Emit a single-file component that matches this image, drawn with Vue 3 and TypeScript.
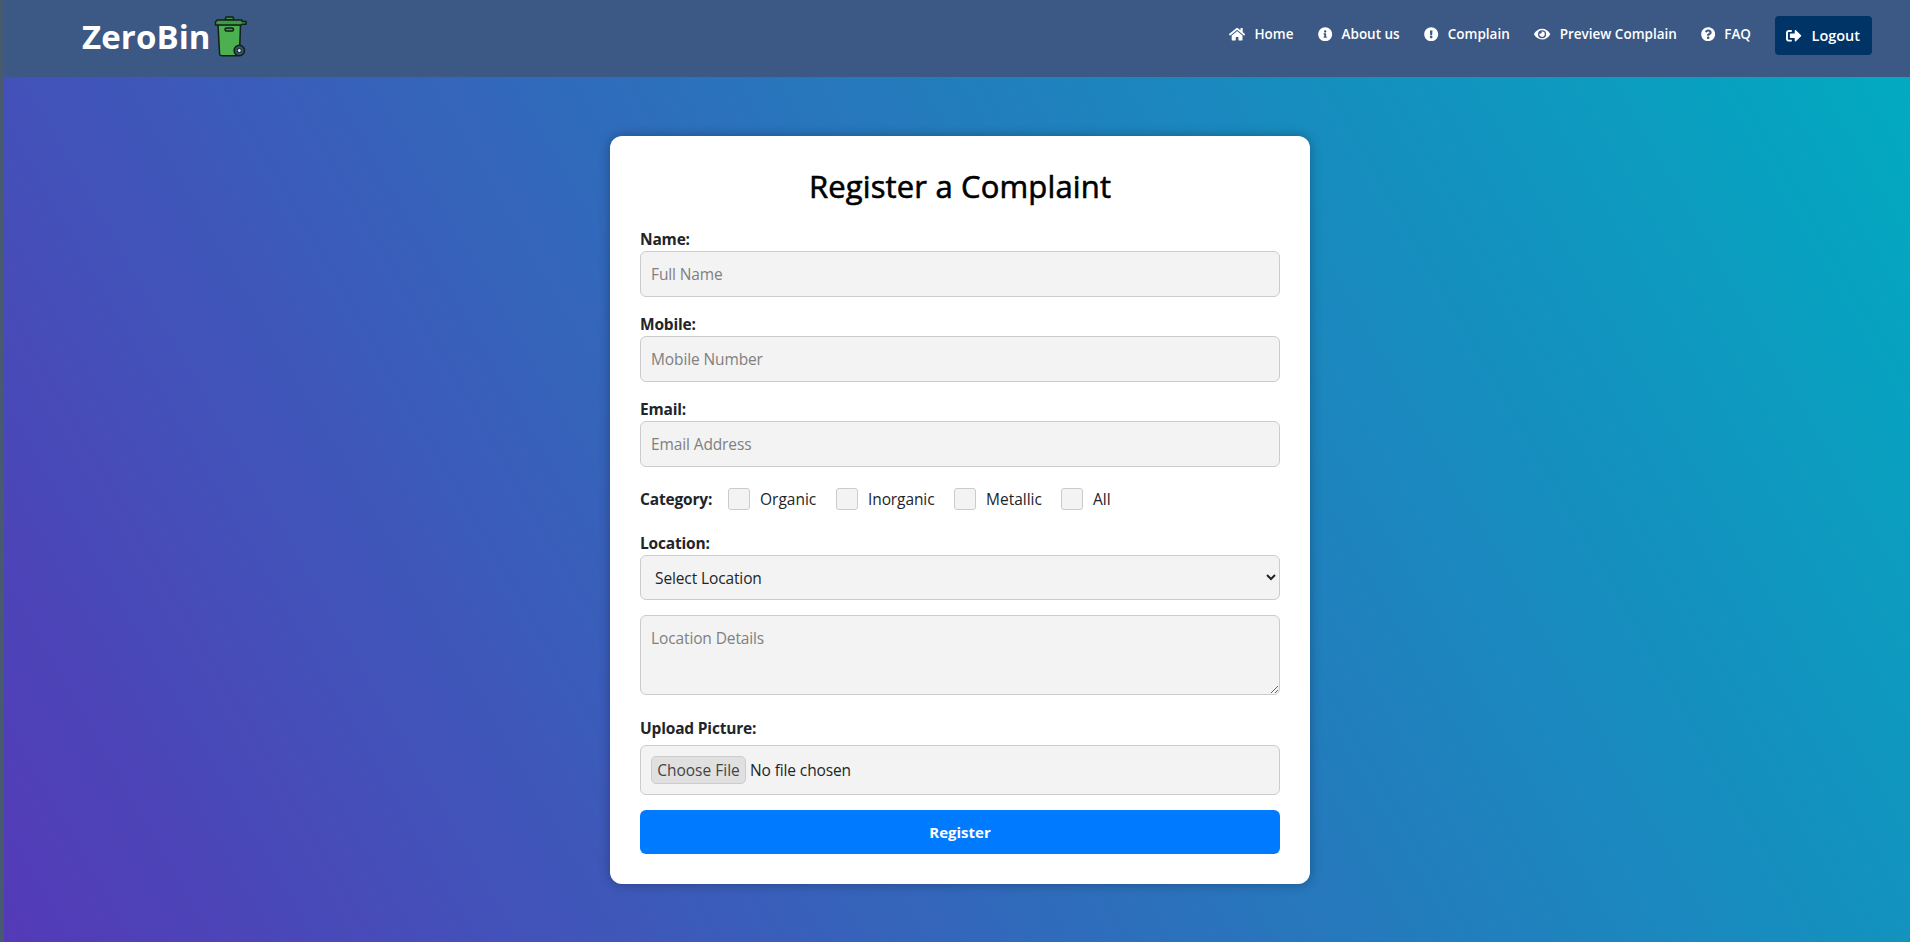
<script setup lang="ts">
import { ref } from 'vue'

interface NavLink {
  id: string
  label: string
  viewBox: string
  path: string
}

const links: NavLink[] = [
  {
    id: 'home',
    label: 'Home',
    viewBox: '0 0 576 512',
    path: 'M280.37 148.26L96 300.11V464a16 16 0 0 0 16 16l112.06-.29a16 16 0 0 0 15.92-16V368a16 16 0 0 1 16-16h64a16 16 0 0 1 16 16v95.64a16 16 0 0 0 16 16.05L464 480a16 16 0 0 0 16-16V300L295.67 148.26a12.19 12.19 0 0 0-15.3 0zM571.6 251.47L488 182.56V44.05a12 12 0 0 0-12-12h-56a12 12 0 0 0-12 12v72.61L318.47 43a48 48 0 0 0-61 0L4.34 251.47a12 12 0 0 0-1.6 16.9l25.5 31A12 12 0 0 0 45.15 301l235.22-193.74a12.19 12.19 0 0 1 15.3 0L530.9 301a12 12 0 0 0 16.9-1.6l25.5-31a12 12 0 0 0-1.7-16.93z',
  },
  {
    id: 'about',
    label: 'About us',
    viewBox: '0 0 512 512',
    path: 'M256 8C119.043 8 8 119.083 8 256c0 136.997 111.043 248 248 248s248-111.003 248-248C504 119.083 392.957 8 256 8zm0 110c23.196 0 42 18.804 42 42s-18.804 42-42 42-42-18.804-42-42 18.804-42 42-42zm56 254c0 6.627-5.373 12-12 12h-88c-6.627 0-12-5.373-12-12v-24c0-6.627 5.373-12 12-12h12v-64h-12c-6.627 0-12-5.373-12-12v-24c0-6.627 5.373-12 12-12h64c6.627 0 12 5.373 12 12v100h12c6.627 0 12 5.373 12 12v24z',
  },
  {
    id: 'complain',
    label: 'Complain',
    viewBox: '0 0 512 512',
    path: 'M504 256c0 136.997-111.043 248-248 248S8 392.997 8 256C8 119.083 119.043 8 256 8s248 111.083 248 248zm-248 50c-25.405 0-46 20.595-46 46s20.595 46 46 46 46-20.595 46-46-20.595-46-46-46zm-43.673-165.346l7.418 136c.347 6.364 5.609 11.346 11.982 11.346h48.546c6.373 0 11.635-4.982 11.982-11.346l7.418-136c.375-6.874-5.098-12.654-11.982-12.654h-63.383c-6.884 0-12.356 5.78-11.981 12.654z',
  },
  {
    id: 'preview',
    label: 'Preview Complain',
    viewBox: '0 0 576 512',
    path: 'M572.52 241.4C518.29 135.59 410.93 64 288 64S57.68 135.64 3.48 241.41a32.35 32.35 0 0 0 0 29.19C57.71 376.41 165.07 448 288 448s230.32-71.64 284.52-177.41a32.35 32.35 0 0 0 0-29.19zM288 400a144 144 0 1 1 144-144 143.93 143.93 0 0 1-144 144zm0-240a95.31 95.31 0 0 0-25.31 3.79 47.85 47.85 0 0 1-66.9 66.9A95.78 95.78 0 1 0 288 160z',
  },
  {
    id: 'faq',
    label: 'FAQ',
    viewBox: '0 0 512 512',
    path: 'M504 256c0 136.997-111.043 248-248 248S8 392.997 8 256C8 119.083 119.043 8 256 8s248 111.083 248 248zM262.655 90c-54.497 0-89.255 22.957-116.549 63.758-3.536 5.286-2.353 12.415 2.715 16.258l34.699 26.31c5.205 3.947 12.621 3.008 16.665-2.122 17.864-22.658 30.113-35.797 57.303-35.797 20.429 0 45.698 13.148 45.698 32.958 0 14.976-12.363 22.667-32.534 33.976C247.128 238.528 216 254.941 216 296v4c0 6.627 5.373 12 12 12h56c6.627 0 12-5.373 12-12v-1.333c0-28.462 83.186-29.647 83.186-106.667 0-58.002-60.165-102-116.531-102zM256 338c-25.365 0-46 20.635-46 46 0 25.364 20.635 46 46 46s46-20.636 46-46c0-25.365-20.635-46-46-46z',
  },
]

const fields = [
  { id: 'name', label: 'Name:', placeholder: 'Full Name' },
  { id: 'mobile', label: 'Mobile:', placeholder: 'Mobile Number' },
  { id: 'email', label: 'Email:', placeholder: 'Email Address' },
]

const categories = ['Organic', 'Inorganic', 'Metallic', 'All']
const picked = ref<string[]>([])
</script>

<template>
  <div class="page">
    <div class="main">
      <header class="bar">
        <div class="brand">
          <span class="brand-name">ZeroBin</span>
          <svg class="bin" viewBox="0 0 34 42" width="34" height="42">
            <g stroke="#10201a" stroke-width="1.5" stroke-linejoin="round">
              <path d="M11.500 4V2.200Q11.500 1 12.700 1h5.600q1.200 0 1.200 1.200V4z" fill="#3f9a45" />
              <path d="M4 8.500h22.500L25.500 38q-.2 1.700-2 1.700H7.600q-1.800 0-2-1.700z" fill="#4caf50" />
              <path d="M3.200 4h24.500l.5 1.500h3.800v2.700h-4l-.8.800H1.500V6z" fill="#3f9a45" />
              <rect x="11" y="12" width="8.500" height="3" rx="1.500" fill="#43a047" />
              <circle cx="25.300" cy="34.500" r="5.200" fill="#34516a" />
              <circle cx="25.300" cy="34.500" r="2" fill="#dfe8f0" stroke-width="1" />
            </g>
          </svg>
        </div>
        <nav class="nav">
          <a v-for="l in links" :key="l.id" class="link" :class="l.id">
            <svg class="icon" :viewBox="l.viewBox"><path :d="l.path" fill="currentColor" /></svg>
            <span>{{ l.label }}</span>
          </a>
          <button class="logout" type="button">
            <svg class="icon" viewBox="0 0 512 512">
              <path
                fill="currentColor"
                d="M497 273L329 441c-15 15-41 4.500-41-17v-96H152c-13.300 0-24-10.700-24-24v-96c0-13.300 10.700-24 24-24h136V88c0-21.400 25.900-32 41-17l168 168c9.300 9.400 9.300 24.600 0 34zM192 436v-40c0-6.600-5.400-12-12-12H96c-17.700 0-32-14.300-32-32V160c0-17.700 14.300-32 32-32h84c6.600 0 12-5.400 12-12V76c0-6.600-5.400-12-12-12H96c-53 0-96 43-96 96v192c0 53 43 96 96 96h84c6.600 0 12-5.400 12-12z"
              />
            </svg>
            <span>Logout</span>
          </button>
        </nav>
      </header>

      <form class="card" @submit.prevent>
        <h1>Register a Complaint</h1>

        <div v-for="f in fields" :key="f.id" class="field">
          <label :for="f.id">{{ f.label }}</label>
          <input :id="f.id" class="control" type="text" :placeholder="f.placeholder" />
        </div>

        <div class="categories">
          <span class="cat-title">Category:</span>
          <label v-for="c in categories" :key="c" class="cat" :class="c.toLowerCase()">
            <input v-model="picked" type="checkbox" :value="c" />
            <span>{{ c }}</span>
          </label>
        </div>

        <label for="location" class="label-location">Location:</label>
        <select id="location" class="control select">
          <option>Select Location</option>
        </select>
        <textarea class="control details" placeholder="Location Details"></textarea>

        <label for="picture" class="label-upload">Upload Picture:</label>
        <input id="picture" class="control file" type="file" />

        <button class="submit" type="submit">Register</button>
      </form>
    </div>
  </div>
</template>

<style>
body {
  margin: 0;
  overflow: hidden;
}
</style>

<style scoped>
* {
  box-sizing: border-box;
}
.page {
  height: 942px;
  padding-left: 4px;
  background: #475a70;
  font-family: 'Open Sans', 'Noto Sans', sans-serif;
  font-size: 15.500px;
  color: #212529;
}
.main {
  height: 942px;
  overflow: hidden;
  background: linear-gradient(60deg, rgb(84, 58, 183) 0%, rgb(0, 172, 193) 100%);
}
.bar {
  display: flex;
  justify-content: space-between;
  align-items: flex-start;
  height: 77px;
  padding: 16px 38px 0 78px;
  background: #3c5885;
  color: #fff;
}
.brand {
  display: flex;
  align-items: flex-start;
}
.brand-name {
  width: 132px;
  font-size: 33px;
  font-weight: 700;
  line-height: 42px;
  letter-spacing: 0.1px;
  white-space: nowrap;
}
.bin {
  display: block;
}
.nav {
  display: flex;
  align-items: flex-start;
}
.link {
  display: flex;
  align-items: center;
  height: 36px;
  margin-right: 24px;
  font-size: 13.500px;
  font-weight: 600;
  white-space: nowrap;
}
.link.home,
.link.about,
.link.complain {
  margin-right: 24.700px;
}
.icon {
  flex: none;
  height: 14.400px;
  margin-right: 9px;
}
.logout {
  display: flex;
  align-items: center;
  width: 97px;
  height: 39px;
  padding: 0 0 0 11px;
  border: 0;
  border-radius: 4px;
  background: #003366;
  color: #fff;
  font-family: inherit;
  font-size: 14.500px;
  font-weight: 600;
}
.logout .icon {
  height: 15.500px;
  margin-right: 10px;
}
.card {
  display: flex;
  flex-direction: column;
  width: 700px;
  height: 748px;
  margin: 59px 600px 0 606px;
  padding: 30px;
  border-radius: 12px;
  background: #fff;
  box-shadow: 0 0 12px rgba(0, 0, 0, 0.3);
}
h1 {
  margin: 0 0 22px;
  font-size: 31px;
  font-weight: 400;
  letter-spacing: 0.150px;
  line-height: 40px;
  text-align: center;
  color: #000;
  -webkit-text-stroke: 0.600px #000;
}
label,
.cat-title {
  line-height: 22px;
}
.field > label,
.label-location,
.label-upload,
.cat-title {
  display: block;
  height: 23px;
  font-weight: 700;
  letter-spacing: -0.180px;
  white-space: nowrap;
}
.field {
  height: 85px;
}
.control {
  display: block;
  width: 640px;
  height: 46px;
  margin: 0;
  padding: 0 10px;
  border: 1px solid #ccc;
  border-radius: 6px;
  background: #f3f3f3;
  font-family: inherit;
  font-size: inherit;
  letter-spacing: -0.120px;
  color: #212529;
}
.control::placeholder {
  color: #808080;
}
.categories {
  display: flex;
  align-items: center;
  height: 22px;
  margin-top: 5px;
}
.cat-title {
  width: 88px;
}
.cat {
  display: flex;
  align-items: center;
  width: 108px;
  white-space: nowrap;
}
.cat.inorganic {
  width: 118px;
  letter-spacing: -0.100px;
}
.cat.metallic {
  width: 107px;
}
.cat input {
  appearance: none;
  flex: none;
  width: 22px;
  height: 22px;
  margin: 0 10px 0 0;
  border: 1px solid #ccc;
  border-radius: 3px;
  background: #f3f3f3;
}
.label-location {
  margin-top: 22px;
}
.select {
  height: 45px;
}
.details {
  height: 80px;
  margin-top: 15px;
  padding-top: 10px;
  line-height: 24px;
  resize: vertical;
}
.label-upload {
  margin: 22px 0 5px;
}
.file {
  height: 50px;
  padding: 10px;
}
.file::file-selector-button {
  box-sizing: border-box;
  width: 95px;
  height: 28px;
  margin: 0 4px 0 0;
  padding: 0;
  border: 1px solid #ccc;
  border-radius: 5px;
  background: #e0e0e0;
  font-family: inherit;
  font-size: inherit;
  color: #444;
}
.submit {
  height: 44px;
  margin-top: 15px;
  padding: 0;
  border: 0;
  border-radius: 6px;
  background: #007bff;
  color: #fff;
  font-family: inherit;
  font-size: 15px;
  font-weight: 700;
}
</style>
